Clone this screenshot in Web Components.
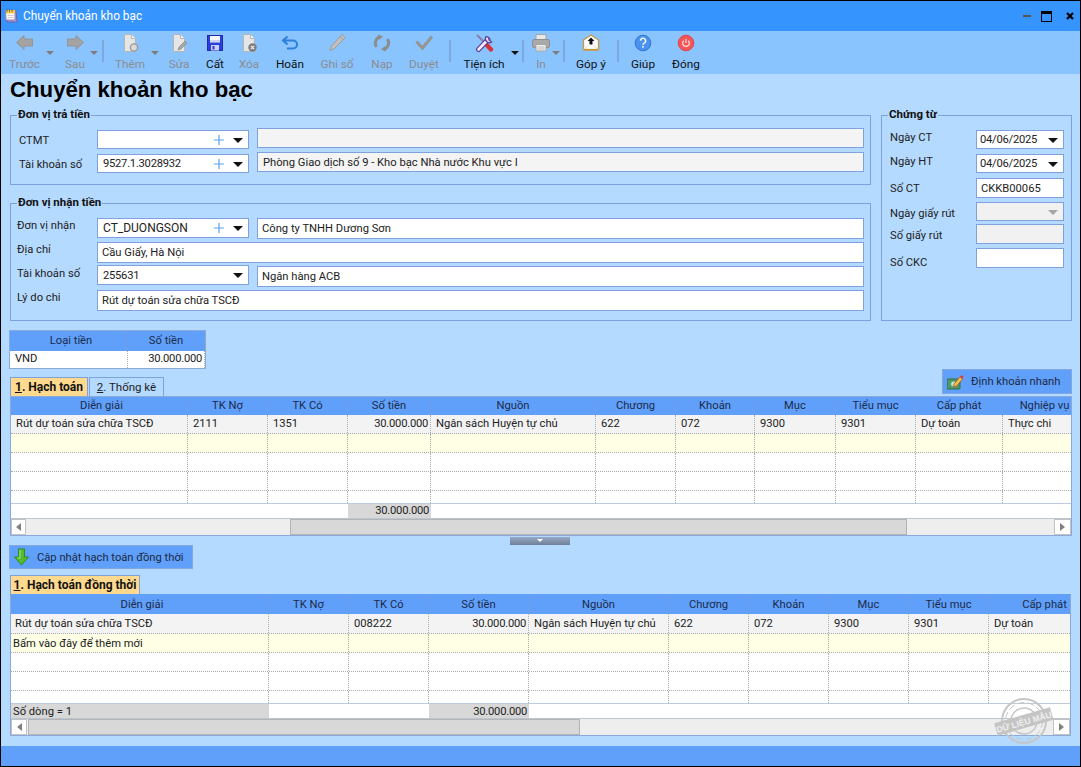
<!DOCTYPE html>
<html lang="vi"><head><meta charset="utf-8"><title>Chuyển khoản kho bạc</title>
<style>html,body{margin:0;padding:0;background:#B5DAFF;overflow:hidden}</style></head>
<body><x-app></x-app>
<script>
const BORDER='#7FA2DE';
function def(name,css,render){
  customElements.define(name,class extends HTMLElement{
    connectedCallback(){
      if(this.shadowRoot)return;
      const s=this.attachShadow({mode:'open'});
      s.innerHTML='<style>'+css+'</style>'+render(this);
    }
  });
}
const ICONS={
back:'<polygon points="1.5,9.500 9,2.500 9,6 17.500,6 17.500,13 9,13 9,16.500" fill="#A3A3A3" stroke="#949494"/>',
fwd:'<polygon points="18.500,9.500 11,2.500 11,6 2.500,6 2.500,13 11,13 11,16.500" fill="#A3A3A3" stroke="#949494"/>',
add:'<path d="M4.500 1.500h7l4 4v13h-11z" fill="#E6E6E6" stroke="#B5B5B5"/><path d="M11.500 1.500v4h4" fill="#F5F5F5" stroke="#B5B5B5"/><circle cx="14" cy="14.500" r="3.600" fill="#DADADA" stroke="#9A9A9A" stroke-width="1.400"/>',
edit:'<path d="M4.500 1.500h7l4 4v13h-11z" fill="#E6E6E6" stroke="#B5B5B5"/><path d="M11.500 1.500v4h4" fill="#F5F5F5" stroke="#B5B5B5"/><path d="M9 17l1-3 6-6 2 2-6 6z" fill="#A8A8A8" stroke="#888" stroke-width=".7"/>',
save:'<rect x="2.500" y="2.500" width="15" height="15" fill="#2B3EDC" stroke="#1E2CA8"/><rect x="5" y="3" width="10" height="6.500" fill="#F4F6FF"/><rect x="5" y="7.500" width="10" height="1" fill="#9FB0EE"/><rect x="6" y="12" width="8" height="5.500" fill="#C9D2F4"/><rect x="7.500" y="13" width="2" height="3.500" fill="#2B3EDC"/>',
del:'<path d="M4.500 1.500h7l4 4v13h-11z" fill="#E6E6E6" stroke="#B5B5B5"/><path d="M11.500 1.500v4h4" fill="#F5F5F5" stroke="#B5B5B5"/><circle cx="13.500" cy="14.500" r="4.200" fill="#7D7D7D"/><path d="M11.800 12.800l3.400 3.400M15.200 12.800l-3.400 3.400" stroke="#EEE" stroke-width="1.200"/>',
undo:'<path d="M7.500 3.500L3 7.500l4.500 4M3.500 7.500H13a3.800 3.800 0 0 1 0 8H7" fill="none" stroke="#2C7FDB" stroke-width="2"/>',
pen:'<path d="M15 1.500l3.200 3.200L7.500 15.500 3 17.500l1.500-4.700z" fill="#BFBFBF" stroke="#9C9C9C"/><path d="M13 3.500l3.200 3.200" stroke="#9C9C9C"/>',
ref:'<path d="M4.500 14A7 7 0 0 1 8 3.600M15.500 6A7 7 0 0 1 12 16.400" fill="none" stroke="#8D8D8D" stroke-width="3"/><path d="M6 1.500l5 2-4 3.500zM14 18.500l-5-2 4-3.500z" fill="#8D8D8D"/>',
check:'<polyline points="2.500,8.500 8.500,15 18,3.500" fill="none" stroke="#959595" stroke-width="3.200"/>',
tool:'<path d="M3 2l8.500 8.500" stroke="#8A7FA8" stroke-width="2"/><path d="M11 10l6 6.500" stroke="#D9323F" stroke-width="4.400" stroke-linecap="round"/><path d="M4.500 16.500L14 6.500" stroke="#5B3D9E" stroke-width="5" stroke-linecap="round"/><path d="M4.500 16.500L14 6.500" stroke="#F2EEFA" stroke-width="2.600" stroke-linecap="round"/><path d="M12 3.500a4 4 0 0 0 .6 5 4 4 0 0 0 5 .5L15 7l-.5-2.500z" fill="#E8E2F5" stroke="#5B3D9E" stroke-width="1.200"/>',
print:'<rect x="5" y="1.500" width="10" height="6" fill="#E8E8E8" stroke="#A5A5A5"/><rect x="1.500" y="6.500" width="17" height="8" rx="1.500" fill="#A9A9A9" stroke="#8F8F8F"/><rect x="5" y="11.500" width="10" height="6.500" fill="#F0F0F0" stroke="#A5A5A5"/><path d="M6.500 14h7M6.500 16h7" stroke="#BBB"/>',
mail:'<path d="M2.500 7L10 2l7.500 5v10h-15z" fill="#FFF" stroke="#C39A3E" stroke-width="1.300"/><path d="M2.500 17l5-5M17.500 17l-5-5" stroke="#EAD9A8"/><path d="M10 4.500l3.500 3.500h-2v3.500h-3V8h-2z" fill="#111"/><path d="M3 16.500h14" stroke="#C39A3E" stroke-width="1.300"/>',
help:'<circle cx="10" cy="10" r="7.800" fill="#4B93EE" stroke="#2F74CF"/><path d="M7.600 7.700a2.500 2.500 0 1 1 3.700 2.200c-.9.5-1.300 1-1.300 2" fill="none" stroke="#F2F7FF" stroke-width="1.500"/><rect x="9.200" y="13" width="1.600" height="1.700" fill="#F2F7FF"/>',
power:'<circle cx="10" cy="10" r="7.800" fill="#F35657" stroke="#E24546"/><path d="M7.700 7.800a3.300 3.300 0 1 0 4.600 0" fill="none" stroke="#FFE2E2" stroke-width="1.200"/><path d="M10 6v4" stroke="#FFE2E2" stroke-width="1.200"/>'
};
const FS='11.2px';
def('x-titlebar',`:host{display:flex;align-items:center;height:30px;background:#3694FF;color:#fff;padding-left:3px;flex:none}
.t{margin-left:4px;font-size:11.9px}.sp{flex:1}svg{display:block}.w{display:flex;align-items:center}`,()=>`
<svg width="15" height="16" viewBox="0 0 15 16"><path d="M2 3h10l1 11H3z" fill="#A79AD8" stroke="#6E60A8"/><path d="M1.500 2.500h9.500v9.500H2z" fill="#FFFBE8" stroke="#8D80C0"/><rect x="2" y="2" width="9" height="3.500" fill="#F2C94C"/><path d="M3 1v3M5.500 1v3M8 1v3" stroke="#555" stroke-width=".8"/><path d="M3.500 7.500h6M3.500 9.500h6" stroke="#B8B2D0" stroke-width=".7"/></svg>
<span class="t"><slot></slot></span><span class="sp"></span>
<div class="w" style="margin-right:6px">
<svg width="8" height="3" style="margin-right:10px"><rect width="8" height="2" y="0" fill="#555"/></svg>
<svg width="11" height="11" style="margin-right:14px"><rect x=".5" y=".5" width="10" height="10" fill="none" stroke="#000"/><rect width="11" height="3" fill="#000"/></svg>
<svg width="8" height="8"><path d="M1 1l6 6M7 1L1 7" stroke="#000" stroke-width="2.200"/></svg></div>`);
def('x-tool',`:host{display:block;position:relative;height:43px;flex:none;text-align:center;font-size:11.8px;color:#111}
:host([off]){color:#8C8C8C}
svg.i{display:block;margin:2px auto 0;width:20px;height:20px}
.l{line-height:18px;height:18px;white-space:nowrap;margin-top:2px}
.c{position:absolute;top:20px;width:0;height:0;border:4px solid transparent;border-top:4px solid #111;border-bottom:0}
:host([off]) .c{border-top-color:#7C7C7C}`,e=>{
  const c=e.getAttribute('caret');
  return `<svg class="i" viewBox="0 0 20 20">${ICONS[e.getAttribute('icon')]}</svg><div class="l"><slot></slot></div>${c!==null?`<span class="c" style="left:${c}px"></span>`:''}`;
});
def('x-sep',`:host{display:block;flex:none;width:2px;height:22px;background:#7CA8DE;margin-top:9px}`,()=>'');
def('x-toolbar',`:host{display:flex;height:43px;background:#8AC4FF;flex:none}`,()=>'<slot></slot>');
def('x-group',`:host{display:block;position:relative;box-sizing:border-box;border:1px solid ${BORDER};}
.t{position:absolute;left:6px;top:-10px;background:#B5DAFF;padding:0 1px;font-weight:700;line-height:16px;font-size:11.5px;color:#111;white-space:nowrap}`,e=>`<span class="t">${e.getAttribute('label')}</span><slot></slot>`);
def('x-input',`:host{display:flex;align-items:center;box-sizing:border-box;border:1px solid ${BORDER};background:#fff;font-size:${FS};color:#222;position:relative;overflow:hidden;white-space:nowrap}
:host([off]){background:#F1F1F1}
:host([tint]){background:#F4F4F4}
.v{flex:1;padding-left:var(--pl,4px);padding-top:var(--pt,0)}
.p{position:absolute;right:24px;top:50%;margin-top:-5px}
.c{position:absolute;right:5px;top:50%;margin-top:-2px;width:0;height:0;border:5px solid transparent;border-top:5px solid #111;border-bottom:0}
:host([dim]) .c{border-top-color:#A5A5A5}
svg{display:block}`,e=>`<span class="v">${e.getAttribute('value')||''}</span>${e.hasAttribute('plus')?'<svg class="p" width="10" height="10"><path d="M5 0v10M0 5h10" stroke="#5BA3E6" stroke-width="1.200"/></svg>':''}${e.hasAttribute('caret')?'<span class="c"></span>':''}`);
def('x-label',`:host{display:block;font-size:${FS};color:#222;line-height:15px;white-space:nowrap}`,()=>'<slot></slot>');
def('x-tab',`:host{display:block;box-sizing:border-box;height:19px;border:1px solid ${BORDER};border-bottom:0;font-size:11.5px;line-height:18px;text-align:center;color:#222;flex:none;white-space:nowrap}
:host([active]){background:#FFD98E;font-weight:700;color:#111;font-size:12px}`,()=>'<slot></slot>');
def('x-btn',`:host{display:flex;align-items:center;box-sizing:border-box;background:#60A0FA;border:1px solid #83A8E0;font-size:${FS};color:#1A2A44;white-space:nowrap}
::slotted(svg){flex:none}`,()=>'<slot name="icon"></slot><span style="margin-left:var(--g,8px)"><slot></slot></span>');
def('x-scroll',`:host{display:flex;height:17px;box-sizing:border-box;border-top:1px solid #B9C6D6;background:#EEE;flex:none}
.b{box-sizing:border-box;background:#fff;border:1px solid #C2C2C2;display:flex;align-items:center;justify-content:center;flex:none}
.t{background:#D8D8D8;box-sizing:border-box;border:1px solid #B4B4B4;flex:none}
.a{width:0;height:0;border:4px solid transparent}`,e=>{
  const g=+e.getAttribute('gap'),w=+e.getAttribute('thumb'),l=+e.getAttribute('lw'),r=+e.getAttribute('rw');
  return `<div class="b" style="width:${l}px"><span class="a" style="border-right:5px solid #808080;border-left:0"></span></div><div style="width:${g}px;flex:none"></div><div class="t" style="width:${w}px"></div><div style="flex:1"></div><div class="b" style="width:${r}px"><span class="a" style="border-left:5px solid #808080;border-right:0"></span></div>`;
});
def('x-grid',`:host{display:block;box-sizing:border-box;border:1px solid #8BAAD9;background:#fff;font-size:${FS};color:#222;overflow:hidden;position:relative}
.r{display:flex;box-sizing:border-box;white-space:nowrap}
.c{flex:none;box-sizing:border-box;overflow:hidden;padding:0 2px 0 5px;border-right:1px dotted #ABABAB}
.r.d{border-bottom:1px dotted #ABABAB}
.c.n{text-align:right;letter-spacing:-.25px}
.h{background:#60A0FA;color:#1B2B4A}
.h .c{text-align:center;border-right:1px solid #6E9FE6;padding:0;letter-spacing:0}
.f{border-top:1px solid #BCCBDA}
.f .c{border-right:0;overflow:visible}
.c:first-child{padding-left:5px}
.c.p2{padding-left:2px}
.c.p4{padding-left:4px}`,e=>{
  const g=JSON.parse(e.getAttribute('config'));
  const cls=i=>(g.num||[]).includes(i)?' n':'';
  const dy=g.dy||0;
  let h=`<div class="r h" style="height:${g.hh}px;line-height:${g.hh+dy}px">`+g.heads.map((t,i)=>`<div class="c" style="width:${g.cols[i]}px">${t}</div>`).join('')+'</div>';
  for(const r of g.rows){
    h+=`<div class="r${r.nl?'':' d'}" style="height:${r.h}px;line-height:${r.h-1+dy}px;background:${r.bg||'#fff'}">`+g.cols.map((w,i)=>{
      let t=(r.c||[])[i]||'',p='';
      if(t[0]==='~'){t=t.slice(1);p=' p2';}
      if(t[0]==='^'){t=t.slice(1);p=' p4';}
      return `<div class="c${cls(i)}${p}" style="width:${w}px">${t}</div>`;}).join('')+'</div>';
  }
  if(g.foot){
    h+=`<div class="r f" style="height:15px;line-height:${14+dy}px">`+g.foot.map(f=>`<div class="c${f.n?' n':''}${f.p?' p2':''}" style="width:${f.w}px;background:${f.bg||'#fff'}">${f.t||''}</div>`).join('')+'</div>';
  }
  if(g.scroll) h+=`<x-scroll gap="${g.scroll.gap}" thumb="${g.scroll.thumb}" lw="${g.scroll.lw}" rw="${g.scroll.rw}"></x-scroll>`;
  return h;
});
def('x-stamp',`:host{display:block;position:absolute;right:0;bottom:0;width:60px;height:50px;pointer-events:none}svg{display:block}`,()=>`
<svg width="60" height="50" viewBox="0 0 60 50"><g fill="none" stroke="#C6C6C6"><circle cx="30" cy="25" r="22" stroke-width="2"/><circle cx="30" cy="25" r="18.500" stroke-dasharray="7 3"/><circle cx="30" cy="25" r="13" stroke-width="1.500"/></g>
<g transform="rotate(-16 30 26)"><rect x="1" y="19" width="58" height="13" fill="#C4C4C4"/><text x="30" y="29" text-anchor="middle" font-family="Liberation Sans" font-weight="700" font-size="8.500" fill="#F0F0F0">DỮ LIỆU MẪU</text></g></svg>`);
const row=(c,bg,h,nl)=>({h,bg,c,nl});
const g1={hh:18,cols:[177,80,80,83,165,80,79,81,80,87,84],num:[3],
 heads:['Diễn giải','TK Nợ','TK Có','Số tiền','Nguồn','Chương','Khoản','Mục','Tiểu mục','Cấp phát','Nghiệp vụ'],
 rows:[row(['Rút dự toán sửa chữa TSCĐ','2111','1351','30.000.000','Ngân sách Huyện tự chủ','622','072','9300','9301','Dự toán','Thực chi'],'#F3F3F3',19),
 row([],'#FFFFE6',19),row([],'#fff',19),row([],'#fff',19),row([],'#fff',12,1)],
 foot:[{w:337},{w:83,bg:'#D8D8D8',t:'30.000.000',n:1},{w:640}],scroll:{gap:264,thumb:617,lw:15,rw:17}};
const g2={hh:19,dy:1,cols:[258,80,80,100,140,80,80,80,80,112],num:[3],
 heads:['Diễn giải','TK Nợ','TK Có','Số tiền','Nguồn','Chương','Khoản','Mục','Tiểu mục','Cấp phát'],
 rows:[row(['^Rút dự toán sửa chữa TSCĐ','','008222','30.000.000','Ngân sách Huyện tự chủ','622','072','9300','9301','Dự toán'],'#F3F3F3',20),
 row(['~Bấm vào đây để thêm mới'],'#FFFFE6',19),row([],'#fff',19),row([],'#fff',19),row([],'#fff',12,1)],
 foot:[{w:258,bg:'#D8D8D8',t:'Số dòng = 1',p:1},{w:160},{w:100,bg:'#D8D8D8',t:'30.000.000',n:1},{w:540}],scroll:{gap:1,thumb:552,lw:16,rw:17}};
const g0={hh:20,cols:[118,77],num:[1],heads:['Loại tiền','Số tiền'],rows:[row(['VND','30.000.000'],'#fff',17,1)]};
const J=o=>JSON.stringify(o).replace(/&/g,'&amp;').replace(/'/g,'&#39;');
def('x-app',`:host{display:flex;flex-direction:column;box-sizing:border-box;width:1081px;height:767px;border:1px solid #000;background:#B5DAFF;font-family:Roboto,"Open Sans",sans-serif;font-size:${FS};overflow:hidden;position:relative}
main{flex:1;display:flex;flex-direction:column;padding:0 8px 0 9px;position:relative;min-height:0}
h1{margin:0;height:41px;font:700 22.200px/31px "Liberation Sans",sans-serif;color:#000;flex:none}
.top{display:flex;gap:10px;flex:none;height:206px}
.left{width:861px;display:flex;flex-direction:column;gap:18px;flex:none}
.f1{display:grid;height:70px;box-sizing:border-box;padding:12px 0 0 8px;grid-template-columns:78px 152px 615px;grid-template-rows:21px 21px;row-gap:3px}
.f2{display:grid;height:118px;box-sizing:border-box;padding:14px 0 0 6px;grid-template-columns:80px 152px 615px;grid-template-rows:21px 21px 21px 21px;row-gap:3px}
.f3{flex:1;display:grid;box-sizing:border-box;padding:14px 7px 0 8px;grid-template-columns:86px 88px;grid-template-rows:24px 24px 24px 22px 24px 20px;align-content:start}
.tx{margin-left:8px}.s3{grid-column:2 / 4}
.f1 x-label{align-self:end;line-height:21px;height:19px}
.cb{align-self:end;height:19px}
.f1 x-input{--pl:5px}.f1 .tx{--pt:1px}.f2 x-input{--pl:4px}
.num{letter-spacing:-.25px}
.currency{width:197px;height:39px;margin:9px 0 0 -1px;flex:none}
.tabrow{display:flex;justify-content:space-between;height:27px;flex:none}
.tabs{display:flex;align-self:flex-end;gap:1px}
.g1{height:140px;flex:none}
.split{width:60px;height:8px;margin:1px 0 0 500px;background:linear-gradient(#97A9C4,#6E7F99);display:flex;justify-content:center;padding-top:2px;box-sizing:border-box;flex:none}
.split i{width:0;height:0;border:3px solid transparent;border-top:3px solid #fff;border-bottom:0}
.upd{width:184px;height:24px;margin:0 0 0 -1px;--g:7px;padding-left:3px;flex:none}
.tab2{display:flex;margin-top:6px;flex:none}
.g2{height:142px;width:1061px;border-top-color:#60A0FA;flex:none}
.fast{width:130px;height:25px;padding-left:4px;--g:7px}
footer{height:20px;background:#60A0FA;flex:none;margin-top:auto}
.stampwrap{position:absolute;left:993px;top:622px;width:60px;height:50px}`,()=>`
<x-titlebar>Chuyển khoản kho bạc</x-titlebar>
<x-toolbar>
<x-tool icon="back" off caret="45" style="width:47px">Trước</x-tool>
<x-tool icon="fwd" off caret="42" style="width:54px">Sau</x-tool>
<x-sep></x-sep>
<x-tool icon="add" off caret="47" style="width:52px">Thêm</x-tool>
<x-tool icon="edit" off style="width:46px">Sửa</x-tool>
<x-tool icon="save" style="width:26px">Cất</x-tool>
<x-tool icon="del" off style="width:42px">Xóa</x-tool>
<x-tool icon="undo" style="width:40px">Hoãn</x-tool>
<x-tool icon="pen" off style="width:54px">Ghi sổ</x-tool>
<x-tool icon="ref" off style="width:36px">Nạp</x-tool>
<x-tool icon="check" off style="width:48px">Duyệt</x-tool>
<x-sep style="margin-left:1px"></x-sep>
<x-tool icon="tool" caret="60" style="width:66px">Tiện ích</x-tool>
<x-sep style="margin-left:5px"></x-sep>
<x-tool icon="print" off caret="28" style="width:34px">In</x-tool>
<x-sep style="margin-left:5px"></x-sep>
<x-tool icon="mail" style="width:52px">Góp ý</x-tool>
<x-sep></x-sep>
<x-tool icon="help" style="width:48px">Giúp</x-tool>
<x-tool icon="power" style="width:38px">Đóng</x-tool>
</x-toolbar>
<main>
<h1>Chuyển khoản kho bạc</h1>
<div class="top">
<div class="left">
<x-group label="Đơn vị trả tiền" class="f1">
<x-label>CTMT</x-label><x-input class="cb" plus caret></x-input><x-input class="tx" tint style="height:20px"></x-input>
<x-label>Tài khoản số</x-label><x-input class="cb num" plus caret value="9527.1.3028932"></x-input><x-input class="tx" tint style="height:20px" value="Phòng Giao dịch số 9 - Kho bạc Nhà nước Khu vực I"></x-input>
</x-group>
<x-group label="Đơn vị nhận tiền" class="f2">
<x-label>Đơn vị nhận</x-label><x-input plus caret style="height:20px;--pl:5px;font-size:12px" value="CT_DUONGSON"></x-input><x-input class="tx" value="Công ty TNHH Dương Sơn"></x-input>
<x-label>Địa chỉ</x-label><x-input class="s3" value="Cầu Giấy, Hà Nội"></x-input>
<x-label>Tài khoản số</x-label><x-input class="num" caret style="height:20px;margin-top:-1px;--pl:5px" value="255631"></x-input><x-input class="tx" value="Ngân hàng ACB"></x-input>
<x-label>Lý do chi</x-label><x-input class="s3" value="Rút dự toán sửa chữa TSCĐ"></x-input>
</x-group>
</div>
<x-group label="Chứng từ" class="f3">
<x-label>Ngày CT</x-label><x-input class="num" caret style="height:19px;--pl:3px" value="04/06/2025"></x-input>
<x-label>Ngày HT</x-label><x-input class="num" caret style="height:19px;--pl:3px" value="04/06/2025"></x-input>
<x-label style="margin-top:3px">Số CT</x-label><x-input style="height:20px" value="CKKB00065"></x-input>
<x-label style="margin-top:4px">Ngày giấy rút</x-label><x-input off caret dim style="height:19px"></x-input>
<x-label style="margin-top:4px">Số giấy rút</x-label><x-input off style="height:20px"></x-input>
<x-label style="margin-top:7px">Số CKC</x-label><x-input style="height:20px"></x-input>
</x-group>
</div>
<x-grid class="currency" config='${J(g0)}'></x-grid>
<div class="tabrow">
<div class="tabs"><x-tab active style="width:78px"><u>1</u>. Hạch toán</x-tab><x-tab style="width:75px"><u>2</u>. Thống kê</x-tab></div>
<x-btn class="fast"><svg slot="icon" width="17" height="16" viewBox="0 0 17 16"><rect x="0" y="5" width="13" height="10" rx="1" fill="#4F9A6C" stroke="#2E6B45"/><circle cx="6.500" cy="10" r="2.500" fill="#BFE3CB"/><path d="M7 10l6-7 2.500 2-6 7-3 1z" fill="#F0C24A" stroke="#B5532E" stroke-width=".8"/><path d="M13 3l1.500-2 2 1.500-1 2.500z" fill="#D8403A"/></svg>Định khoản nhanh</x-btn>
</div>
<x-grid class="g1" config='${J(g1)}'></x-grid>
<div class="split"><i></i></div>
<x-btn class="upd"><svg slot="icon" width="17" height="18" viewBox="0 0 17 18"><path d="M5.500 1h6v8h4l-7 8-7-8h4z" fill="#52BC2C" stroke="#2F8B1C"/><path d="M7 2v8H4.500" fill="none" stroke="#A8E58A"/></svg>Cập nhật hạch toán đồng thời</x-btn>
<div class="tab2"><x-tab active style="width:130px"><u>1</u>. Hạch toán đồng thời</x-tab></div>
<x-grid class="g2" config='${J(g2)}'></x-grid>
<div class="stampwrap"><x-stamp></x-stamp></div>
</main>
<footer></footer>`);
</script></body></html>
